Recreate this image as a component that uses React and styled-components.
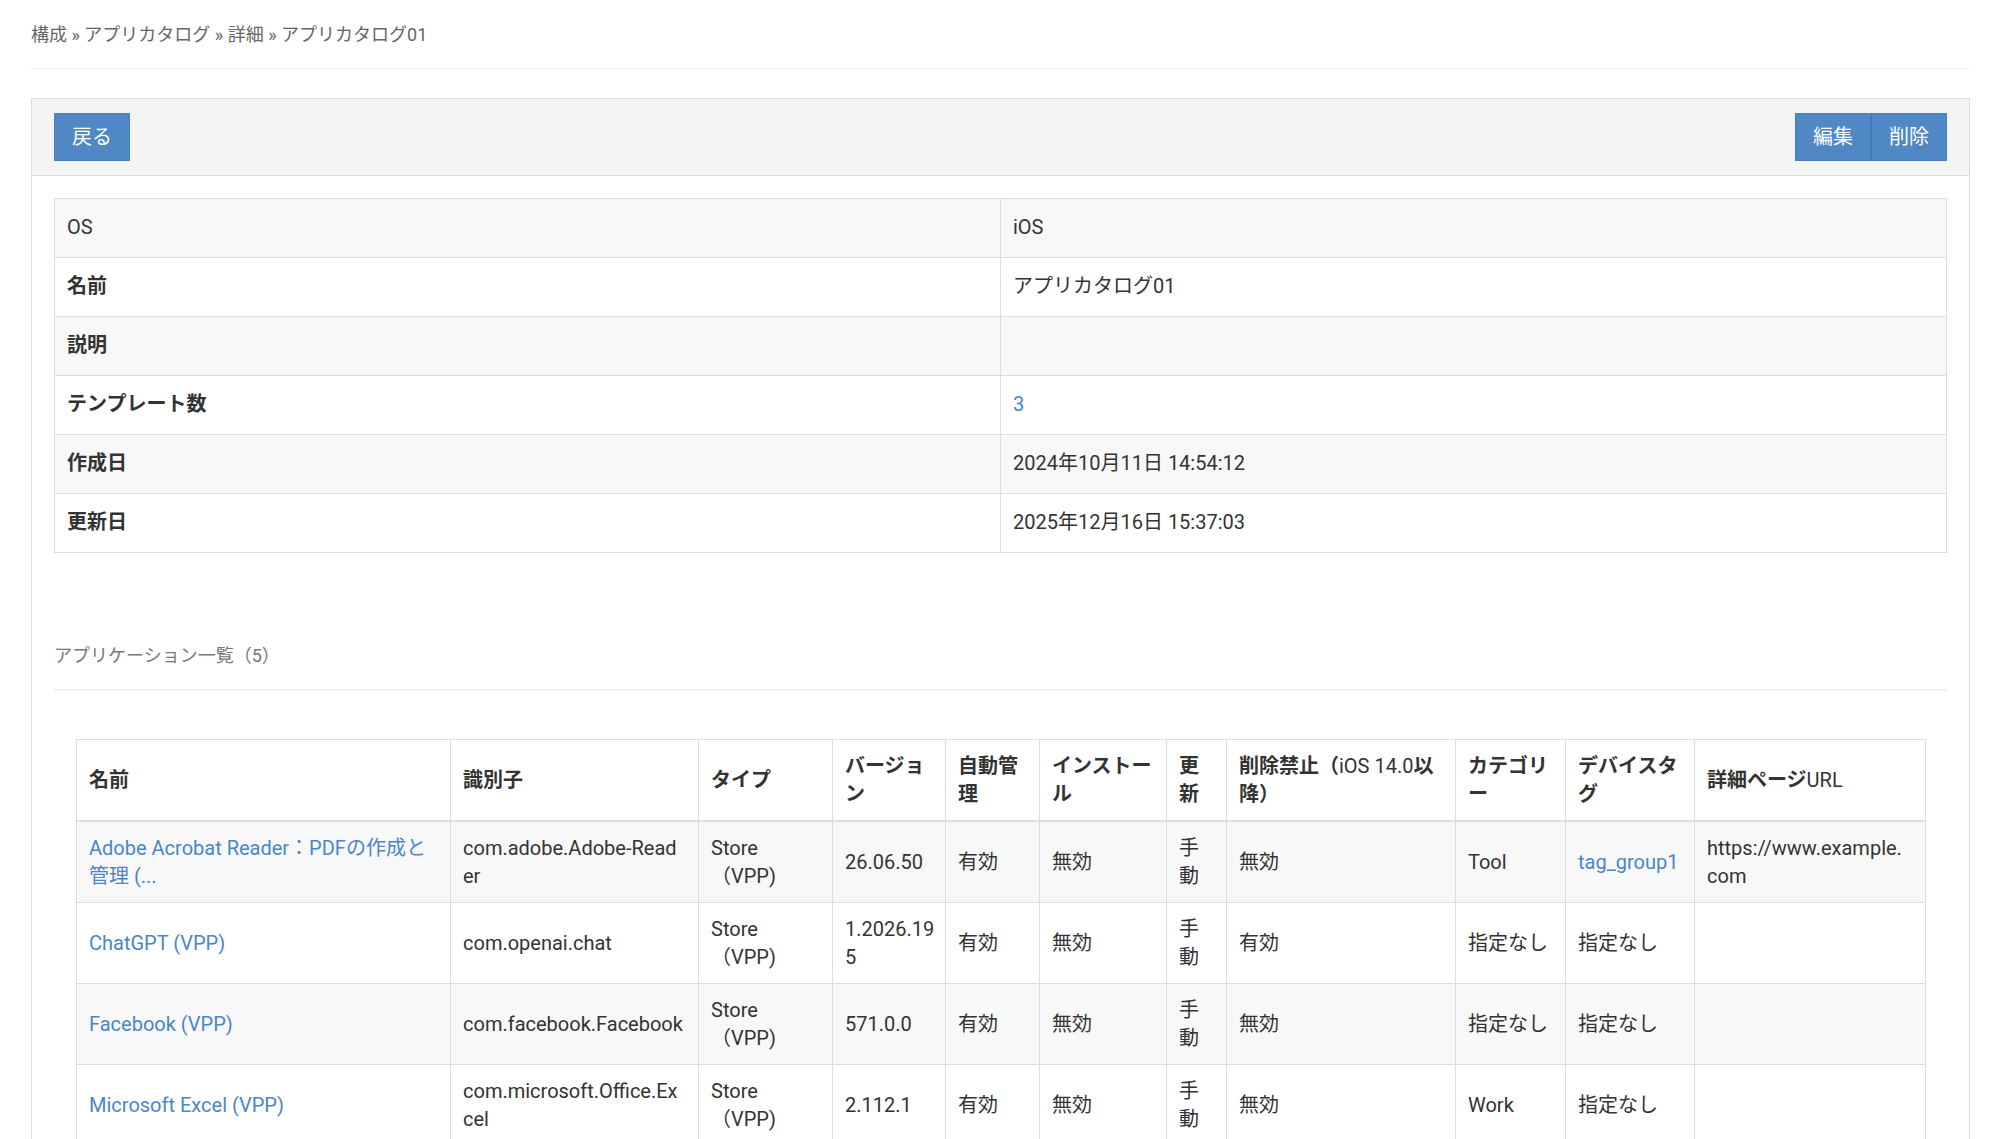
import React from 'react';
import styled, { createGlobalStyle } from 'styled-components';

const GlobalStyle = createGlobalStyle`
  body {
    margin: 0;
    background: #fff;
    color: #333;
    font-family: Roboto, "Noto Sans CJK JP", sans-serif;
    font-size: 20px;
    line-height: 1.4;
  }
  * { box-sizing: border-box; }
`;

const Page = styled.div`
  padding: 0 30px 0 31px;
`;

const Breadcrumb = styled.div`
  padding: 22px 0 20px;
  border-bottom: 1px solid #eee;
  font-size: 18px;
  line-height: 26px;
  color: #666;
  margin-bottom: 29px;
`;

const Panel = styled.div`
  border: 1px solid #ddd;
  min-height: 1100px;
`;

const PanelHeading = styled.div`
  display: flex;
  justify-content: space-between;
  align-items: center;
  background: #f4f4f4;
  border-bottom: 1px solid #ddd;
  padding: 14px 22px;
`;

const BtnGroup = styled.div`
  display: flex;
`;

const Button = styled.button`
  font-family: inherit;
  font-size: 20px;
  line-height: 28px;
  color: #fff;
  background: #5087c5;
  border: 1px solid #4a80bd;
  padding: 9px 17px;
  cursor: pointer;
  & + & {
    border-left-color: #3f75b2;
  }
`;

const PanelBody = styled.div`
  padding: 22px 22px 0;
`;

const Table = styled.table`
  width: 100%;
  border-collapse: collapse;
  table-layout: fixed;
`;

const InfoRow = styled.tr`
  background: ${p => (p.$striped ? '#f8f8f8' : '#fff')};
`;

const InfoHead = styled.th`
  width: 50%;
  text-align: left;
  font-weight: 700;
  border: 1px solid #ddd;
  padding: 14px 12px 16px;
  line-height: 28px;
`;

const InfoCell = styled.td`
  border: 1px solid #ddd;
  padding: 14px 12px 16px;
  line-height: 28px;
`;

const Latin = styled.span`
  font-weight: 400;
`;

const Link = styled.a`
  color: #4a86c8;
  text-decoration: none;
`;

const SectionTitle = styled.div`
  margin-top: 90px;
  padding-bottom: 20px;
  border-bottom: 2px solid #f0f0f0;
  font-size: 18px;
  line-height: 26px;
  color: #777;
`;

const TableWrap = styled.div`
  padding: 48px 21px 0 22px;
`;

const AppRow = styled.tr`
  background: ${p => (p.$striped ? '#f8f8f8' : '#fff')};
`;

const AppHead = styled.th`
  text-align: left;
  vertical-align: middle;
  font-weight: 700;
  border: 1px solid #ddd;
  border-bottom-width: 2px;
  padding: 12px 12px;
  line-height: 28px;
  height: 80px;
`;

const AppCell = styled.td`
  vertical-align: middle;
  border: 1px solid #ddd;
  padding: 12px ${p => p.$padRight || 12}px 12px 12px;
  line-height: 28px;
  height: 80px;
  word-break: ${p => (p.$breakAll ? 'break-all' : 'normal')};
`;

const columns = [
  { label: '名前', width: 374 },
  { label: '識別子', width: 248 },
  { label: 'タイプ', width: 134 },
  { label: 'バージョン', width: 113 },
  { label: '自動管理', width: 94 },
  { label: 'インストール', width: 127 },
  { label: '更新', width: 60 },
  { label: <>削除禁止（<Latin>iOS 14.0</Latin>以降）</>, width: 229 },
  { label: 'カテゴリー', width: 110 },
  { label: 'デバイスタグ', width: 129 },
  { label: <>詳細ページ<Latin>URL</Latin></>, width: 231 },
];

const apps = [
  {
    name: 'Adobe Acrobat Reader：PDFの作成と管理 (...',
    id: 'com.adobe.Adobe-Reader',
    version: '26.06.50',
    remove: '無効',
    category: 'Tool',
    tag: 'tag_group1',
    url: 'https://www.example.com',
  },
  { name: 'ChatGPT (VPP)', id: 'com.openai.chat', version: '1.2026.195', remove: '有効', category: '指定なし', tag: '指定なし', url: '' },
  { name: 'Facebook (VPP)', id: 'com.facebook.Facebook', version: '571.0.0', remove: '無効', category: '指定なし', tag: '指定なし', url: '' },
  { name: 'Microsoft Excel (VPP)', id: 'com.microsoft.Office.Excel', version: '2.112.1', remove: '無効', category: 'Work', tag: '指定なし', url: '' },
  { name: 'Microsoft Word (VPP)', id: 'com.microsoft.Office.Word', version: '2.112.1', remove: '無効', category: 'Work', tag: '指定なし', url: '' },
];

const info = [
  { label: <Latin>OS</Latin>, value: 'iOS' },
  { label: '名前', value: 'アプリカタログ01' },
  { label: '説明', value: '' },
  { label: 'テンプレート数', value: <Link href="#">3</Link> },
  { label: '作成日', value: '2024年10月11日 14:54:12' },
  { label: '更新日', value: '2025年12月16日 15:37:03' },
];

export default function App() {
  return (
    <Page>
      <GlobalStyle />
      <Breadcrumb>構成 » アプリカタログ » 詳細 » アプリカタログ01</Breadcrumb>
      <Panel>
        <PanelHeading>
          <Button>戻る</Button>
          <BtnGroup>
            <Button>編集</Button>
            <Button>削除</Button>
          </BtnGroup>
        </PanelHeading>
        <PanelBody>
          <Table>
            <tbody>
              {info.map((row, i) => (
                <InfoRow key={i} $striped={i % 2 === 0}>
                  <InfoHead>{row.label}</InfoHead>
                  <InfoCell>{row.value}</InfoCell>
                </InfoRow>
              ))}
            </tbody>
          </Table>

          <SectionTitle>アプリケーション一覧（5）</SectionTitle>

          <TableWrap>
            <Table>
              <colgroup>
                {columns.map((c, i) => (
                  <col key={i} style={{ width: c.width }} />
                ))}
              </colgroup>
              <thead>
                <AppRow>
                  {columns.map((c, i) => (
                    <AppHead key={i}>{c.label}</AppHead>
                  ))}
                </AppRow>
              </thead>
              <tbody>
                {apps.map((a, i) => (
                  <AppRow key={i} $striped={i % 2 === 0}>
                    <AppCell><Link href="#">{a.name}</Link></AppCell>
                    <AppCell $breakAll>{a.id}</AppCell>
                    <AppCell>Store（VPP)</AppCell>
                    <AppCell $breakAll $padRight={8}>{a.version}</AppCell>
                    <AppCell>有効</AppCell>
                    <AppCell>無効</AppCell>
                    <AppCell>手動</AppCell>
                    <AppCell>{a.remove}</AppCell>
                    <AppCell>{a.category}</AppCell>
                    <AppCell>{a.tag.startsWith('tag') ? <Link href="#">{a.tag}</Link> : a.tag}</AppCell>
                    <AppCell $breakAll $padRight={18}>{a.url}</AppCell>
                  </AppRow>
                ))}
              </tbody>
            </Table>
          </TableWrap>
        </PanelBody>
      </Panel>
    </Page>
  );
}
